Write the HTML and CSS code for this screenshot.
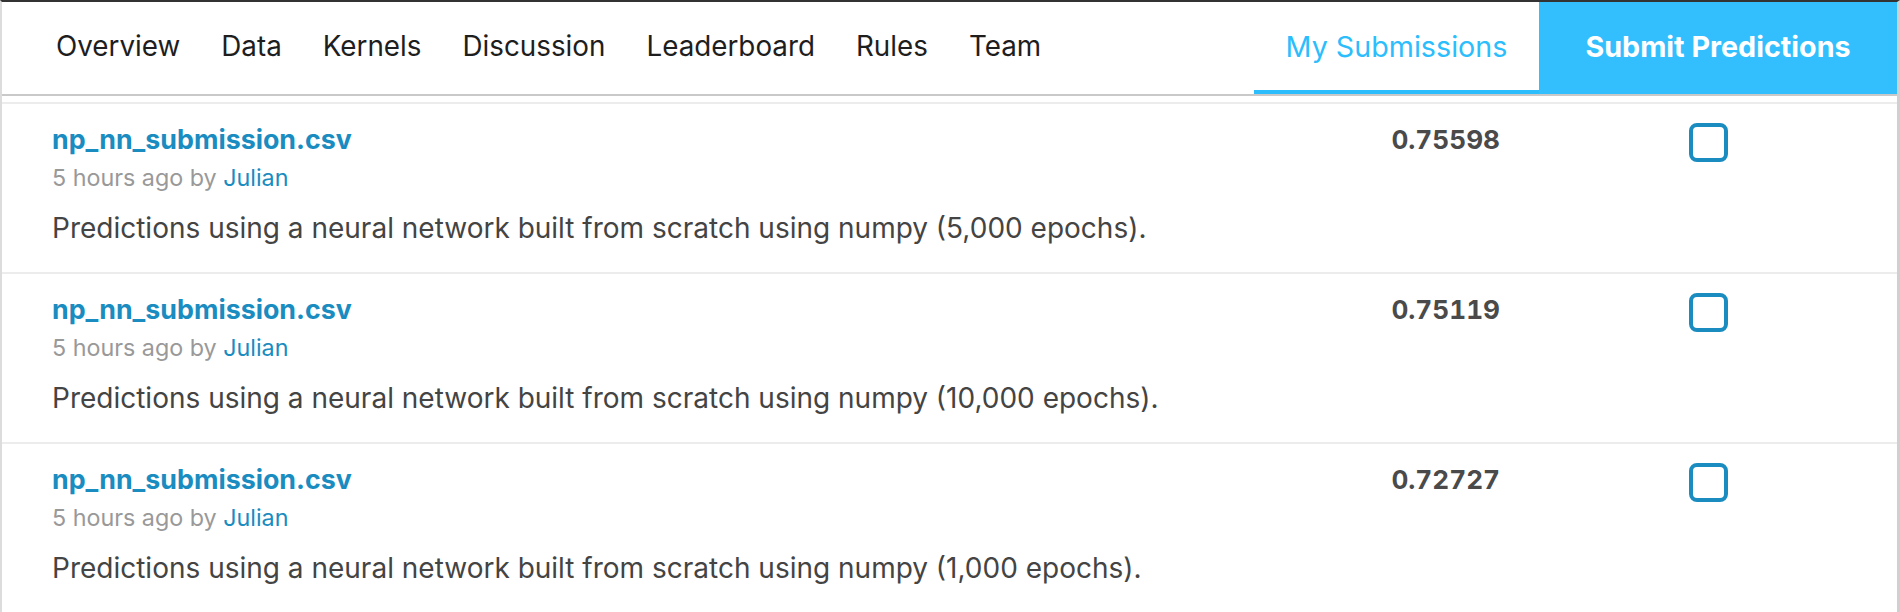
FILE: index.html
```html
<!DOCTYPE html>
<html lang="en">
<head>
<meta charset="utf-8">
<title>My Submissions</title>
<link rel="stylesheet" href="styles.css">
</head>
<body>
<div class="page">
  <nav class="nav">
    <ul class="nav-links">
      <li class="nav-item">Overview</li>
      <li class="nav-item">Data</li>
      <li class="nav-item">Kernels</li>
      <li class="nav-item">Discussion</li>
      <li class="nav-item">Leaderboard</li>
      <li class="nav-item">Rules</li>
      <li class="nav-item">Team</li>
    </ul>
    <div class="nav-right">
      <div class="tab tab-active">My Submissions</div>
      <div class="btn-submit">Submit Predictions</div>
    </div>
  </nav>
  <div class="list">
    <div class="row">
      <div class="info">
        <div class="title">np_nn_submission.csv</div>
        <div class="meta">5 hours ago by <span class="author">Julian</span></div>
        <div class="desc">Predictions using a neural network built from scratch using numpy (5,000 epochs).</div>
      </div>
      <div class="score">0.75598</div>
      <div class="check"></div>
    </div>
    <div class="row">
      <div class="info">
        <div class="title">np_nn_submission.csv</div>
        <div class="meta">5 hours ago by <span class="author">Julian</span></div>
        <div class="desc">Predictions using a neural network built from scratch using numpy (10,000 epochs).</div>
      </div>
      <div class="score">0.75119</div>
      <div class="check"></div>
    </div>
    <div class="row">
      <div class="info">
        <div class="title">np_nn_submission.csv</div>
        <div class="meta">5 hours ago by <span class="author">Julian</span></div>
        <div class="desc">Predictions using a neural network built from scratch using numpy (1,000 epochs).</div>
      </div>
      <div class="score">0.72727</div>
      <div class="check"></div>
    </div>
  </div>
</div>
</body>
</html>
```
FILE: styles.css
```css
html, body {
  margin: 0;
  padding: 0;
  background: #ffffff;
}
body {
  font-family: Inter, Roboto, "Liberation Sans", Arial, sans-serif;
  color: #222;
}
.page {
  border-top: 2px solid #333333;
  border-left: 2px solid #dcdcdc;
  border-right: 3px solid #d0d0d0;
  min-height: 610px;
  box-sizing: border-box;
}
.nav {
  display: flex;
  align-items: stretch;
  justify-content: space-between;
  height: 94px;
  border-bottom: 2px solid #c9c9c9;
  box-sizing: border-box;
}
.nav-links {
  display: flex;
  align-items: center;
  list-style: none;
  margin: 0;
  padding: 0 0 4px 33px;
}
.nav-item {
  padding: 0 20px 0 21px;
  font-size: 27.8px;
  color: #1e1e1e;
}
.nav-right {
  display: flex;
  align-items: stretch;
}
.tab {
  width: 285px;
  display: flex;
  align-items: center;
  justify-content: center;
  font-size: 28.7px;
  box-sizing: border-box;
}
.tab-active {
  color: #2bbdfc;
  border-bottom: 4px solid #2bbdfc;
}
.btn-submit {
  width: 358px;
  display: flex;
  align-items: center;
  justify-content: center;
  background: #33bffd;
  color: #ffffff;
  font-size: 28.7px;
  font-weight: 700;
  padding-bottom: 3px;
  box-sizing: border-box;
}
.list {
  margin-top: 6px;
}
.row {
  display: flex;
  align-items: flex-start;
  border-top: 2px solid #ececec;
  padding: 19px 169px 29px 50px;
}
.info {
  flex: 1;
}
.title {
  font-size: 26.8px;
  line-height: 32px;
  font-weight: 700;
  color: #1a8cc0;
}
.meta {
  margin-top: 8px;
  font-size: 23.3px;
  line-height: 30px;
  color: #999999;
}
.author {
  color: #1a8cc0;
}
.desc {
  margin-top: 20px;
  font-size: 28px;
  line-height: 30px;
  color: #444444;
}
.score {
  width: 150px;
  margin-top: 1px;
  margin-right: 189px;
  text-align: right;
  font-size: 26.2px;
  line-height: 32px;
  font-weight: 700;
  font-variant-numeric: tabular-nums;
  color: #4a4a4a;
}
.check {
  width: 39px;
  height: 39px;
  border: 4px solid #1a8cc0;
  border-radius: 8px;
  box-sizing: border-box;
}
```
